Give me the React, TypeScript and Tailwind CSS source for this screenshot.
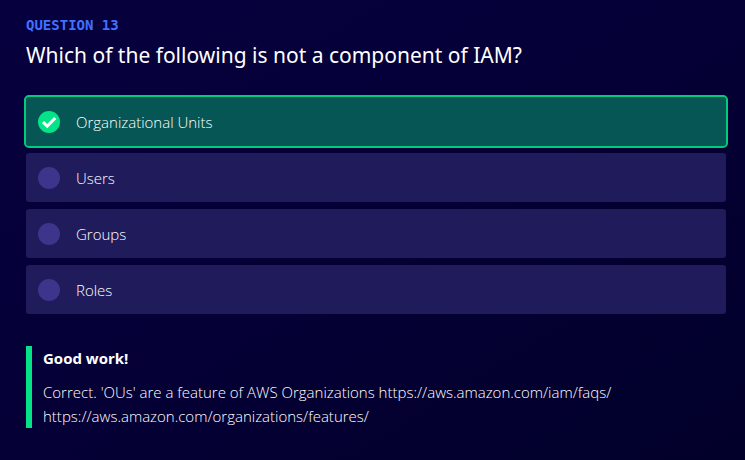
import { useState } from "react";

const options = ["Organizational Units", "Users", "Groups", "Roles"];
const correct = "Organizational Units";

export default function App() {
  const [selected, setSelected] = useState(correct);

  return (
    <main className="min-h-screen bg-linear-to-br from-[#07003f] via-[#050036] to-[#02002a] pt-[15px] pr-[19px] pb-8 pl-[26px] font-['Open_Sans','Noto_Sans',sans-serif] text-[15px] text-white">
      <p className="font-['DejaVu_Sans_Mono','Liberation_Mono',monospace] text-sm leading-5 font-bold text-[#4270ff] uppercase">
        Question 13
      </p>
      <h1 id="question" className="mt-1 font-['Noto_Sans','Open_Sans',sans-serif] text-[21px] leading-8 font-normal">
        Which of the following is not a component of IAM?
      </h1>

      <fieldset aria-labelledby="question" className="mt-[26px] flex flex-col gap-[7px]">
        {options.map((option) => (
          <label
            key={option}
            className="flex h-[49px] cursor-pointer items-center gap-4 rounded-[3px] bg-[#201b5b] px-3 font-light has-checked:bg-[#055654] has-checked:outline-2 has-checked:outline-[#04ca7c]"
          >
            <span className="grid size-[22px] shrink-0 place-items-center">
              <input
                type="radio"
                name="answer"
                value={option}
                checked={selected === option}
                onChange={() => setSelected(option)}
                className="col-start-1 row-start-1 size-[22px] appearance-none rounded-full bg-[#3d348b] checked:bg-[#04e388]"
              />
              {selected === option && (
                <svg
                  aria-hidden="true"
                  viewBox="0 0 22 22"
                  className="pointer-events-none col-start-1 row-start-1 size-[22px]"
                  fill="none"
                  stroke="white"
                  strokeWidth="3"
                >
                  <path d="M5 11.2 L9.2 15.2 L17.2 7" />
                </svg>
              )}
            </span>
            <span className="pt-0.5">{option}</span>
          </label>
        ))}
      </fieldset>

      <section className="mt-8 border-l-[6px] border-[#04e388] pl-[11px]">
        <h2 className="leading-6 font-bold">Good work!</h2>
        <p className="mt-[10px] leading-6 font-light">
          Correct. 'OUs' are a feature of AWS Organizations https://aws.amazon.com/iam/faqs/
          https://aws.amazon.com/organizations/features/
        </p>
      </section>
    </main>
  );
}
